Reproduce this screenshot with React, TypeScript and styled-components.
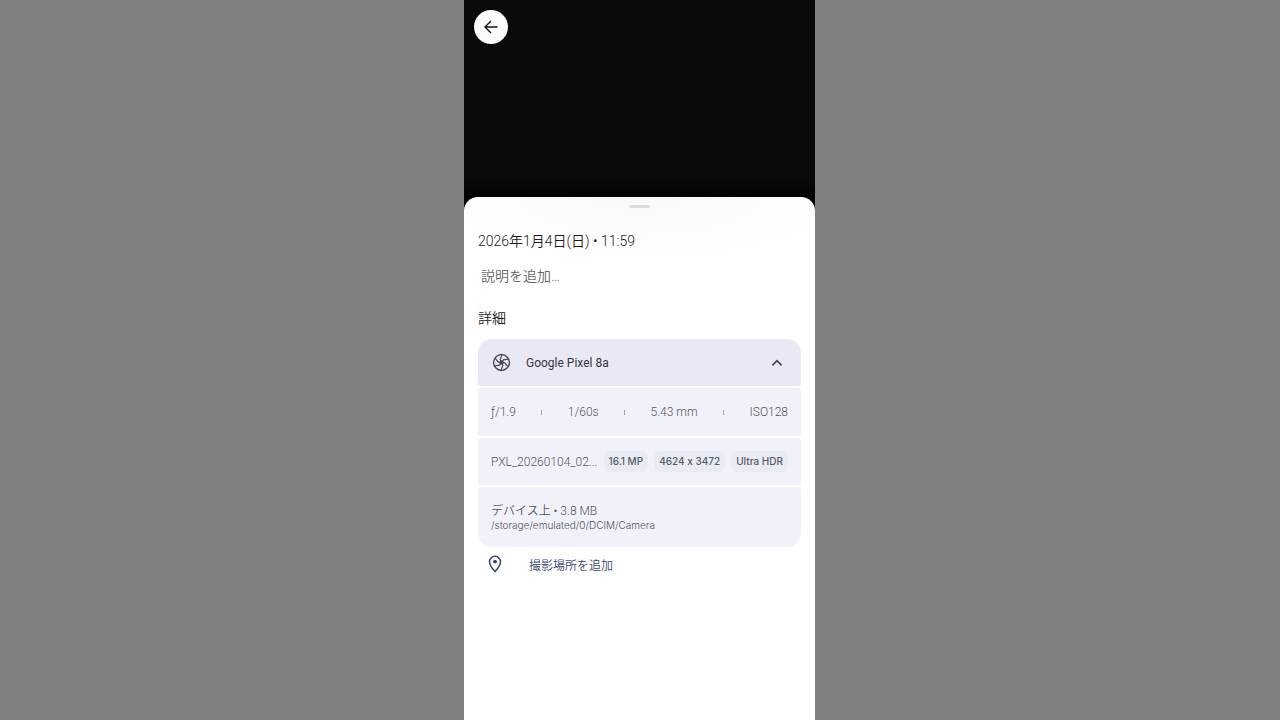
import React from 'react';
import styled, { createGlobalStyle } from 'styled-components';

const GlobalStyle = createGlobalStyle`
  * { box-sizing: border-box; }
  body {
    margin: 0;
    padding-right: 1px;
    background: #808080;
    font-family: Roboto, "Noto Sans CJK JP", sans-serif;
    color: #1b1b20;
  }
  button, input { font: inherit; color: inherit; border: 0; background: none; padding: 0; margin: 0; }
  button { cursor: pointer; }
  h1, h2, p { margin: 0; font-weight: 400; }
`;

const Screen = styled.main`
  display: flex;
  flex-direction: column;
  width: 100%;
  max-width: 351px;
  min-height: 100vh;
  margin: 0 auto;
  background: #0a0a0a;
`;

const Preview = styled.header`
  height: 197px;
  padding: 10px;
  background: linear-gradient(#0a0a0a 180px, #000 197px);
`;

const BackButton = styled.button`
  display: grid;
  place-items: center;
  width: 34px;
  height: 34px;
  border-radius: 50%;
  background: #fbfbfb;
`;

const SheetBackdrop = styled.div`
  flex: 1;
  display: flex;
  background: #000;
`;

const Sheet = styled.section`
  flex: 1;
  min-width: 0;
  padding: 0 14px 16px;
  border-radius: 14px 14px 0 0;
  background: radial-gradient(ellipse 200px 64px at 50% 0, #f8f8f8, #fff);
`;

const Handle = styled.div`
  width: 21px;
  height: 3px;
  margin: 8px auto 23px;
  border-radius: 2px;
  background: #dcdce0;
`;

const DateTime = styled.h1`
  font-size: 14px;
  font-weight: 350;
  line-height: 20px;
`;

const Description = styled.input`
  display: block;
  width: 100%;
  height: 20px;
  margin: 15px 0 22px;
  padding: 0 3px;
  font-size: 14px;
  font-weight: 350;
  line-height: 20px;
  outline: none;
  &::placeholder { color: #66666a; opacity: 1; }
`;

const SectionTitle = styled.h2`
  font-size: 14px;
  font-weight: 350;
  line-height: 20px;
  margin-bottom: 11px;
`;

const Card = styled.div`
  display: flex;
  flex-direction: column;
  gap: 2px;
  border-radius: 14px;
  overflow: hidden;
`;

const DeviceRow = styled.button`
  display: flex;
  align-items: center;
  height: 47px;
  padding: 0 14px;
  border-radius: 0 0 3px 3px;
  background: #e9e9f5;
  color: #35353d;
  font-size: 12px;
  text-align: left;
`;

const DeviceName = styled.span`
  flex: 1;
  padding-left: 15px;
`;

const Row = styled.div`
  display: flex;
  align-items: center;
  justify-content: space-between;
  height: 48px;
  padding: 0 13px;
  border-radius: 3px;
  background: #f1f1fa;
  color: #54545c;
  font-size: 12px;
  font-weight: 300;
`;

const Divider = styled.span`
  width: 1px;
  height: 5px;
  background: #a4a4ae;
`;

const FileRow = styled(Row)`
  height: 47px;
`;

const FileName = styled.span`
  flex: 1;
  min-width: 0;
  white-space: nowrap;
`;

const Chips = styled.div`
  display: flex;
  gap: 6px;
`;

const Chip = styled.span`
  padding: 0 5px;
  border-radius: 6px;
  background: #e9ebf4;
  color: #555b64;
  font-family: Inter, sans-serif;
  font-size: 10px;
  font-weight: 500;
  font-feature-settings: "calt" 0;
  line-height: 21px;
  white-space: nowrap;
`;

const Storage = styled(Row)`
  flex-direction: column;
  align-items: flex-start;
  justify-content: center;
  height: 60px;
`;

const StorageSize = styled.p`
  font-weight: 350;
  line-height: 16px;
`;

const StoragePath = styled.p`
  font-family: Inter, sans-serif;
  font-size: 10px;
  font-weight: 300;
  line-height: 12px;
`;

const LocationButton = styled.button`
  display: flex;
  align-items: center;
  gap: 25px;
  width: 100%;
  height: 20px;
  margin-top: 7px;
  padding-left: 8px;
  color: #3c4870;
  font-size: 12px;
  font-weight: 350;
`;

const BackIcon = () => (
  <svg width="18" height="18" viewBox="0 0 18 18" fill="none" stroke="#151515" strokeWidth="1.4" aria-hidden="true">
    <path d="M15.5 9H3.2M9 3L3 9l6 6" />
  </svg>
);

const ApertureIcon = () => (
  <svg width="19" height="19" viewBox="0 0 24 24" fill="none" stroke="#4a4a50" strokeWidth="1.8" aria-hidden="true">
    <circle cx="12" cy="12" r="10" />
    <circle cx="12" cy="12" r="2" fill="#4a4a50" />
    {[0, 60, 120, 180, 240, 300].map((angle) => (
      <path key={angle} d="M12 12L10.3 8.2L12.6 2.4" strokeWidth="1.5" transform={`rotate(${angle} 12 12)`} />
    ))}
  </svg>
);

const ChevronUpIcon = () => (
  <svg width="20" height="20" viewBox="0 0 20 20" fill="none" stroke="#44444c" strokeWidth="1.7" aria-hidden="true">
    <path d="M5.4 12.3L10 7.7l4.6 4.6" />
  </svg>
);

const PinIcon = () => (
  <svg width="18" height="20" viewBox="0 0 18 20" fill="none" aria-hidden="true">
    <path d="M9 17.6C5.4 13.8 3.5 10.9 3.5 7.8a5.5 5.5 0 0 1 11 0c0 3.1-1.9 6-5.5 9.8z" stroke="#344575" strokeWidth="1.5" />
    <circle cx="9" cy="7.6" r="1.9" fill="#344575" />
  </svg>
);

const chips = ['16.1 MP', '4624 x 3472', 'Ultra HDR'];

export default function App() {
  return (
    <>
      <GlobalStyle />
      <Screen>
        <Preview>
          <BackButton type="button" aria-label="戻る"><BackIcon /></BackButton>
        </Preview>
        <SheetBackdrop>
          <Sheet>
            <Handle />
            <DateTime>2026年1月4日(日) • 11:59</DateTime>
            <Description type="text" aria-label="説明" placeholder="説明を追加…" />
            <SectionTitle>詳細</SectionTitle>
            <Card>
              <DeviceRow type="button" aria-expanded="true">
                <ApertureIcon />
                <DeviceName>Google Pixel 8a</DeviceName>
                <ChevronUpIcon />
              </DeviceRow>
              <Row>
                <span>ƒ/1.9</span>
                <Divider />
                <span>1/60s</span>
                <Divider />
                <span>5.43 mm</span>
                <Divider />
                <span>ISO128</span>
              </Row>
              <FileRow>
                <FileName>PXL_20260104_02...</FileName>
                <Chips>{chips.map((label) => <Chip key={label}>{label}</Chip>)}</Chips>
              </FileRow>
              <Storage>
                <StorageSize>デバイス上 • 3.8 MB</StorageSize>
                <StoragePath>/storage/emulated/0/DCIM/Camera</StoragePath>
              </Storage>
            </Card>
            <LocationButton type="button"><PinIcon />撮影場所を追加</LocationButton>
          </Sheet>
        </SheetBackdrop>
      </Screen>
    </>
  );
}
